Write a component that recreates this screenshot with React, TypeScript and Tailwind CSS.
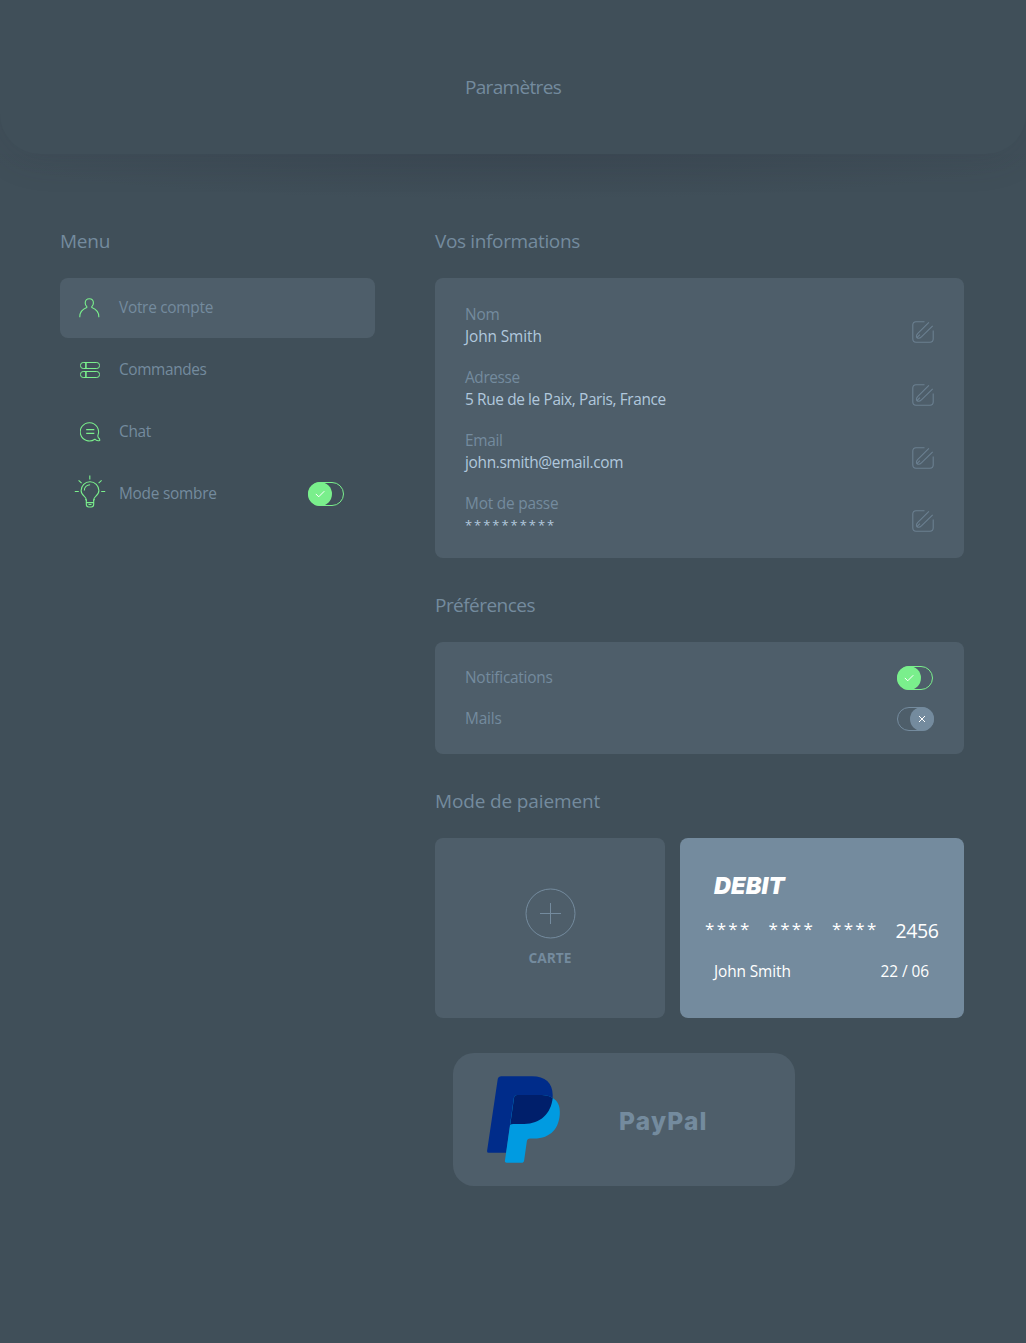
import type { ReactNode } from "react";

function UserIcon() {
  return (
    <svg className="-mt-px mr-px" width="21" height="20" viewBox="0 0 21 20" fill="none" stroke="#7aef8c" strokeWidth="1.1" strokeLinecap="square">
      <path d="M.8 18.600c0-4.600 2.500-7.500 7-9.200v-.8C6.800 7.700 6.200 6.400 6.200 4.900c0-2.500 1.700-4.200 4.100-4.200s4.100 1.700 4.100 4.200c0 1.500-.6 2.800-1.600 3.700v.8c4.500 1.700 7 4.600 7 9.200" />
    </svg>
  );
}

function OrdersIcon() {
  return (
    <svg width="20" height="18" viewBox="0 0 20 18" fill="none" stroke="#7aef8c" strokeWidth="1">
      <rect x="0.500" y="1.500" width="19" height="6" rx="2.700" />
      <rect x="0.500" y="10.500" width="19" height="6" rx="2.700" />
      <path d="M5.900 1.500v6M5.900 10.500v6" strokeWidth="1.600" />
    </svg>
  );
}

function ChatIcon() {
  return (
    <svg className="-mt-px ml-px" width="21" height="21" viewBox="0 0 22 22" fill="none" stroke="#7aef8c" strokeWidth="1.1" strokeLinejoin="round">
      <path d="M18.800 14.800A9.600 9.600 0 1 0 15.500 19.100C16.900 20.600 18.800 20.900 20.700 20.400C20.900 18.900 20.200 18.300 19.500 17.800C18.700 17 18.600 16 18.800 14.800" />
      <path d="M6.500 9h8.500M6.500 12.900h8.500" strokeWidth="1.200" />
    </svg>
  );
}

function BulbIcon() {
  return (
    <svg className="-mt-[5px]" width="32" height="34" viewBox="0 0 32 34" fill="none" stroke="#7aef8c" strokeWidth="1.1" strokeLinejoin="round">
      <path d="M12.500 26c0-2.600-.6-3.300-2.200-4.600C8.300 19.800 7.100 18 7.100 15.600a8.900 8.900 0 0 1 17.800 0c0 2.400-1.200 4.200-3.200 5.800-1.600 1.300-2.200 2-2.200 4.600" />
      <path d="M10.300 15.500c.1-3.300 2.500-5.700 5.800-5.800" />
      <path d="M11.500 24l.8 1.300v4c0 1.700.9 2.700 2.500 2.700h2.400c1.600 0 2.500-1 2.500-2.700v-4l.8-1.300M12.500 27.600h7M14.500 29.500h3" />
      <path d="M.8 16.500h4M27.200 16.500h4M15.800.5v4M4.600 5.300l3 2.800M27.600 5.300l-3 2.800" />
    </svg>
  );
}

function EditIcon() {
  return (
    <svg width="22" height="22" viewBox="0 0 22 22" fill="none" stroke="#748b9e" strokeOpacity="0.75" strokeWidth="1.1" strokeLinejoin="round">
      <path d="M12.500.8H4A3.300 3.300 0 0 0 .8 4v14A3.300 3.300 0 0 0 4 21.200h14a3.300 3.300 0 0 0 3.200-3.200V9.500" />
      <path d="M16.900 1.300L5.600 12.600c-1.500 1.600-1.400 3-.7 4.100 1.200.7 2.900.8 4.500-.8L20.700 4.800" />
      <path d="M4.900 16.700L7.900 13.700" />
    </svg>
  );
}

function PayPalLogo() {
  return (
    <svg width="73" height="87" viewBox="126 93 220 261">
      <path fill="#002c8a" d="M168 93H262C301 93 324 112 324 150C324 200 290 237 238 237H205Q197 237 195 245L184 324H131Q125.500 324 126.300 318L158.500 101Q160 93 168 93Z" />
      <path fill="#009be1" d="M217 150H285C304 150 316 154 324 159C339 168 345.500 182 345.500 201C345.500 249 318 281 268 281H256Q247 281 246 290L238 346Q237 354 229 354H185Q179 354 180 348L207 158Q208.500 150 217 150Z" />
      <path fill="#001f6b" d="M217 150H285C304 150 316 154 324 159C319 206 287 237 238 237H205Q199 237 196 240L207.500 158Q208.500 150 217 150Z" />
    </svg>
  );
}

function Toggle({ on }: { on: boolean }) {
  return on ? (
    <span className="flex h-6 w-9 shrink-0 rounded-full border border-[#7aef8c]">
      <span className="-my-px -ml-px flex size-6 items-center justify-center rounded-full bg-[#7aef8c]">
        <svg width="10" height="8" viewBox="0 0 10 8" fill="none" stroke="#fff" strokeWidth="1">
          <path d="M.8 3.900L3.700 6.800L9.300 1.200" />
        </svg>
      </span>
    </span>
  ) : (
    <span className="-mr-px flex h-6 w-[37px] shrink-0 justify-end rounded-full border border-[#748b9e]">
      <span className="-my-px -mr-px flex size-6 items-center justify-center rounded-full bg-[#748b9e]">
        <svg width="8" height="8" viewBox="0 0 8 8" fill="none" stroke="#fff" strokeWidth="1">
          <path d="M1 1l6 6M7 1L1 7" />
        </svg>
      </span>
    </span>
  );
}

function Heading({ children, spacing }: { children: ReactNode; spacing: string }) {
  return <h2 className={`mb-[23px] text-[19px] leading-7 whitespace-nowrap text-[#748b9e] ${spacing}`}>{children}</h2>;
}

const menu = [
  { label: "Votre compte", icon: <UserIcon />, spacing: "tracking-[-0.27px]", active: true },
  { label: "Commandes", icon: <OrdersIcon />, spacing: "tracking-[-0.37px]" },
  { label: "Chat", icon: <ChatIcon />, spacing: "tracking-[-0.3px]" },
  { label: "Mode sombre", icon: <BulbIcon />, spacing: "tracking-[-0.24px]", toggle: true },
];

const details = [
  { label: "Nom", value: "John Smith", labelSpacing: "tracking-[-0.2px]", spacing: "tracking-[-0.1px]" },
  { label: "Adresse", value: "5 Rue de le Paix, Paris, France", labelSpacing: "tracking-[-0.37px]", spacing: "tracking-[-0.37px]" },
  { label: "Email", value: "john.smith@email.com", labelSpacing: "tracking-[-0.3px]", spacing: "tracking-[-0.31px]" },
  { label: "Mot de passe", value: "**********", labelSpacing: "tracking-[-0.21px]", spacing: "text-[13px] leading-5 tracking-[1.95px]" },
];

export default function App() {
  return (
    <div className="h-[1343px] w-[1026px] overflow-hidden bg-[#404f59] font-['Open_Sans',sans-serif] text-[15.400px] text-[#748b9e]">
      <header className="relative flex h-[154px] items-center justify-center rounded-b-[40px] bg-[#404f59] pt-5 shadow-[0_4px_36px_rgba(48,56,68,0.16)]">
        <h1 className="text-[19px] leading-7 tracking-[-0.66px]">Paramètres</h1>
      </header>

      <main className="flex gap-[60px] bg-[radial-gradient(540px_46px_at_513px_0,rgba(48,56,68,0.3),rgba(48,56,68,0.14)_55%,transparent)] pt-[73px] pl-[60px]">
        <aside className="w-[315px]">
          <Heading spacing="tracking-[-0.25px]">Menu</Heading>
          <nav className="flex flex-col gap-0.5">
            {menu.map((m) => (
              <a key={m.label} className={`flex h-[60px] items-center rounded-lg pr-[31px] pl-3.5 ${m.active ? "bg-[#4e5e6a]" : ""}`}>
                <span className="mr-[13px] flex w-8 justify-center">{m.icon}</span>
                <span className={`flex-1 leading-6 ${m.spacing}`}>{m.label}</span>
                {m.toggle && <Toggle on />}
              </a>
            ))}
          </nav>
        </aside>

        <div className="w-[529px]">
          <section className="mb-[33px]">
            <Heading spacing="tracking-[-0.36px]">Vos informations</Heading>
            <div className="flex h-[280px] flex-col gap-[19px] rounded-lg bg-[#4e5e6a] px-[30px] pt-[26px]">
              {details.map((d) => (
                <div key={d.label} className="flex h-11 justify-between leading-[22px]">
                  <div>
                    <div className={d.labelSpacing}>{d.label}</div>
                    <div className={`text-[#b1c8dd] ${d.spacing}`}>{d.value}</div>
                  </div>
                  <button className="mt-[17px] size-[22px]"><EditIcon /></button>
                </div>
              ))}
            </div>
          </section>

          <section className="mb-[33px]">
            <Heading spacing="tracking-[-0.54px]">Préférences</Heading>
            <div className="flex h-28 flex-col gap-[17px] rounded-lg bg-[#4e5e6a] pt-6 pr-[31px] pl-[30px]">
              <div className="flex h-6 items-center justify-between"><span className="leading-6 tracking-[-0.23px]">Notifications</span><Toggle on /></div>
              <div className="flex h-6 items-center justify-between"><span className="leading-6 tracking-[-0.15px]">Mails</span><Toggle on={false} /></div>
            </div>
          </section>

          <section>
            <Heading spacing="tracking-[-0.14px]">Mode de paiement</Heading>
            <div className="flex gap-[15px]">
              <button className="flex h-[180px] w-[230px] flex-col items-center rounded-lg bg-[#4e5e6a] pt-[50px]">
                <svg className="ml-px" width="51" height="51" viewBox="0 0 51 51" fill="none" stroke="#748b9e">
                  <circle cx="25.500" cy="25.500" r="24.500" />
                  <path d="M25.500 15v21M15 25.500h21" />
                </svg>
                <span className="mt-[9px] text-[13.700px] leading-5 font-bold">CARTE</span>
              </button>
              <div className="h-[180px] w-[284px] rounded-lg bg-[#748b9e] pt-[33px] text-white">
                <div className="pl-[34px] font-['Inter',sans-serif] text-[23.500px] leading-[30px] font-black tracking-[0.1px] italic">DEBIT</div>
                <div className="mt-4 flex h-7 items-center pl-[25px] text-[17px] leading-7">
                  <span className="-mt-1 w-[63.500px] tracking-[2.3px]">****</span>
                  <span className="-mt-1 w-[63.500px] tracking-[2.3px]">****</span>
                  <span className="-mt-1 w-[63.500px] tracking-[2.3px]">****</span>
                  <span className="text-[19.500px] tracking-[-0.4px]">2456</span>
                </div>
                <div className="mt-[15px] flex justify-between pr-[35px] pl-[34px] leading-6">
                  <span className="tracking-[-0.1px]">John Smith</span>
                  <span className="tracking-[-0.05px]">22 / 06</span>
                </div>
              </div>
            </div>
            <button className="mt-[35px] ml-[18px] flex h-[133px] w-[342px] items-center rounded-[21px] bg-[#4e5e6a] pl-[34px]">
              <PayPalLogo />
              <span className="mt-0.5 ml-[59px] font-['Inter',sans-serif] text-[24.500px] leading-8 font-extrabold tracking-[1.2px]">PayPal</span>
            </button>
          </section>
        </div>
      </main>
    </div>
  );
}
